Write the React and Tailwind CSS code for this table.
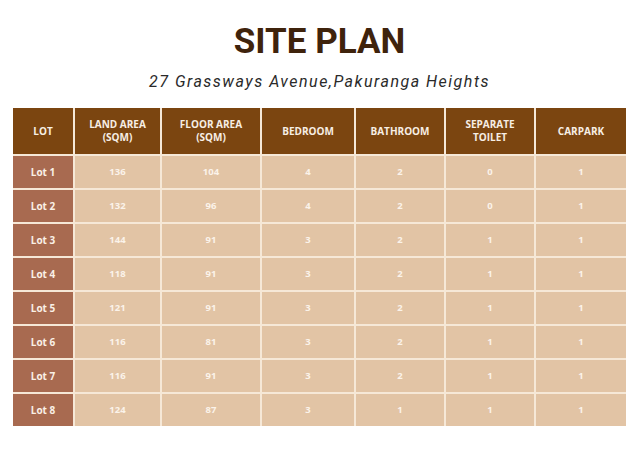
import React from "react"

const headers = [
  ["LOT"],
  ["LAND AREA", "(SQM)"],
  ["FLOOR AREA", "(SQM)"],
  ["BEDROOM"],
  ["BATHROOM"],
  ["SEPARATE", "TOILET"],
  ["CARPARK"],
]

const rows = [
  ["Lot 1", 136, 104, 4, 2, 0, 1],
  ["Lot 2", 132, 96, 4, 2, 0, 1],
  ["Lot 3", 144, 91, 3, 2, 1, 1],
  ["Lot 4", 118, 91, 3, 2, 1, 1],
  ["Lot 5", 121, 91, 3, 2, 1, 1],
  ["Lot 6", 116, 81, 3, 2, 1, 1],
  ["Lot 7", 116, 91, 3, 2, 1, 1],
  ["Lot 8", 124, 87, 3, 1, 1, 1],
]

export default function App() {
  return (
    <div className="w-[639px] h-[452px] bg-white flex flex-col items-center">
      <h1 className="mt-[22px] text-[35px] leading-[40px] font-bold text-[#3f230c] font-['Roboto',sans-serif]">
        SITE PLAN
      </h1>
      <p className="mt-[10px] text-[16px] leading-[20px] italic tracking-[1.5px] text-[#2a2a2a] font-['Roboto',sans-serif]">
        27 Grassways Avenue,Pakuranga Heights
      </p>

      <div className="mt-[16px] self-start ml-[13px] grid grid-cols-[60px_85px_98px_92px_88px_88px_90px] gap-[2px] bg-[#f6e8d7] font-['Open_Sans',sans-serif]">
        {headers.map((h, i) => (
          <div key={i} className="h-[46px] bg-[#7b4510] flex flex-col items-center justify-center text-[10px] leading-[13px] font-bold text-[#f7eee4]">
            {h.map((line) => (
              <span key={line}>{line}</span>
            ))}
          </div>
        ))}
        {rows.map((r) =>
          r.map((v, j) => (
            <div
              key={r[0] + j}
              className={
                j === 0
                  ? "h-[32px] bg-[#a86a50] flex items-center justify-center text-[10px] font-bold text-[#faf0e6]"
                  : "h-[32px] bg-[#e2c4a5] flex items-center justify-center text-[9.5px] font-bold text-[#fbf3ea]"
              }
            >
              {v}
            </div>
          ))
        )}
      </div>
    </div>
  )
}
